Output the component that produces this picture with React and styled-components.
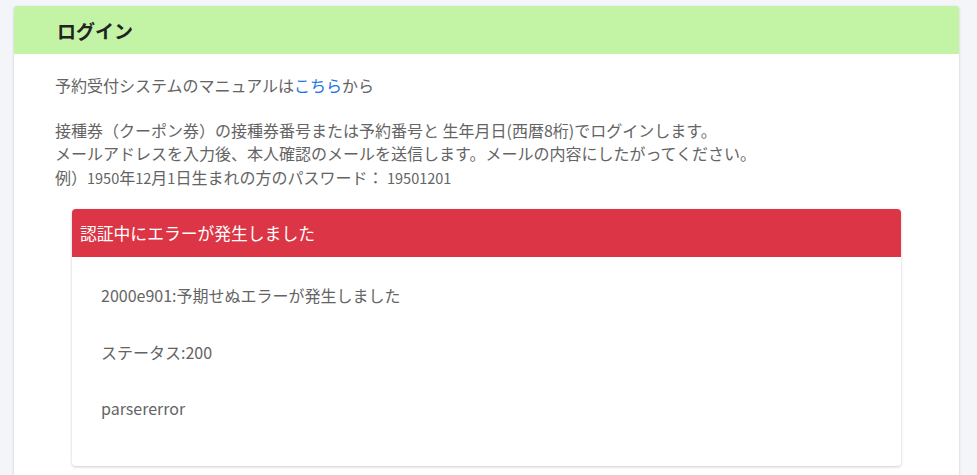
import React from "react";
import styled, { createGlobalStyle } from "styled-components";

const GlobalStyle = createGlobalStyle`
  body {
    margin: 0;
    background: #f4f5f9;
    font-family: "Noto Sans CJK JP", "Noto Sans", sans-serif;
    color: #646464;
  }
`;

const Page = styled.div`
  padding: 6px 18px 0 14px;
  height: 475px;
  box-sizing: border-box;
  overflow: hidden;
`;

const Card = styled.section`
  background: #fff;
  border-radius: 3px;
  box-shadow: 0 1px 3px rgba(0, 0, 0, 0.18);
  min-height: 520px;
`;

const CardHeader = styled.header`
  background: #c3f3a5;
  height: 48px;
  display: flex;
  align-items: center;
  padding: 0 43px;
  border-radius: 3px 3px 0 0;
  h1 {
    margin: 0;
    font-size: 19px;
    font-weight: 700;
    color: #222;
  }
`;

const CardBody = styled.div`
  padding: 20px 41px;
`;

const Text = styled.p`
  margin: 0 0 ${(p) => p.$gap || 21}px;
  font-size: 16px;
  line-height: 23.5px;
  a {
    color: #1a73e8;
    text-decoration: none;
  }
`;

const Num = styled.span`
  font-size: 14.5px;
`;

const ErrorCard = styled.div`
  margin: 0 17px;
  background: #fff;
  border-radius: 4px;
  box-shadow: 0 1px 3px rgba(0, 0, 0, 0.2);
  overflow: hidden;
`;

const ErrorHeader = styled.div`
  background: #dc3545;
  color: #fff;
  height: 48px;
  display: flex;
  align-items: center;
  padding: 0 8px;
  font-size: 16.8px;
`;

const ErrorBody = styled.div`
  padding: 27px 29px 12px;
  display: flex;
  flex-direction: column;
  gap: 33px;
  p {
    margin: 0;
    font-size: 16px;
    line-height: 23.5px;
  }
  p:last-child {
    margin-bottom: 33px;
  }
`;

export default function App() {
  return (
    <>
      <GlobalStyle />
      <Page>
        <Card>
          <CardHeader>
            <h1>ログイン</h1>
          </CardHeader>
          <CardBody>
            <Text>
              予約受付システムのマニュアルは<a href="#">こちら</a>から
            </Text>
            <Text $gap={20}>
              接種券（クーポン券）の接種券番号または予約番号と 生年月日(西暦8桁)でログインします。
              <br />
              メールアドレスを入力後、本人確認のメールを送信します。メールの内容にしたがってください。
              <br />
              例）<Num>1950</Num>年<Num>12</Num>月<Num>1</Num>日生まれの方のパスワード： <Num>19501201</Num>
            </Text>
            <ErrorCard>
              <ErrorHeader>認証中にエラーが発生しました</ErrorHeader>
              <ErrorBody>
                <p>2000e901:予期せぬエラーが発生しました</p>
                <p>ステータス:200</p>
                <p>parsererror</p>
              </ErrorBody>
            </ErrorCard>
          </CardBody>
        </Card>
      </Page>
    </>
  );
}
